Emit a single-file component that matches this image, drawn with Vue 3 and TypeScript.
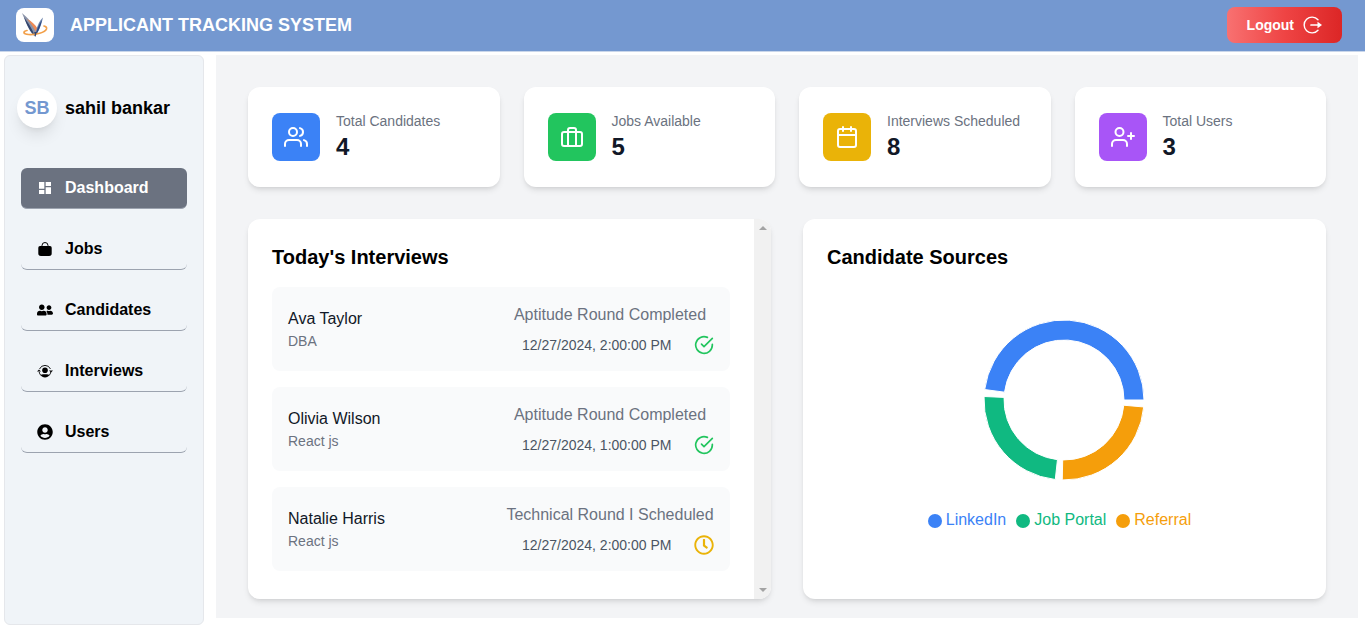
<script setup lang="ts">
interface Slice { name: string; value: number; color: string }
interface Interview { name: string; role: string; status: string; time: string; done: boolean }

const nav = [
  { label: 'Dashboard', icon: 'dashboard', active: true },
  { label: 'Jobs', icon: 'bag', active: false },
  { label: 'Candidates', icon: 'people', active: false },
  { label: 'Interviews', icon: 'orbit', active: false },
  { label: 'Users', icon: 'account', active: false },
]

const stats = [
  { label: 'Total Candidates', value: 4, tone: 'blue', icon: 'users' },
  { label: 'Jobs Available', value: 5, tone: 'green', icon: 'briefcase' },
  { label: 'Interviews Scheduled', value: 8, tone: 'yellow', icon: 'calendar' },
  { label: 'Total Users', value: 3, tone: 'purple', icon: 'userplus' },
]

const interviews: Interview[] = [
  { name: 'Ava Taylor', role: 'DBA', status: 'Aptitude Round Completed', time: '12/27/2024, 2:00:00 PM', done: true },
  { name: 'Olivia Wilson', role: 'React js', status: 'Aptitude Round Completed', time: '12/27/2024, 1:00:00 PM', done: true },
  { name: 'Natalie Harris', role: 'React js', status: 'Technical Round I Scheduled', time: '12/27/2024, 2:00:00 PM', done: false },
]

const sources: Slice[] = [
  { name: 'LinkedIn', value: 2, color: '#3b82f6' },
  { name: 'Job Portal', value: 1, color: '#10b981' },
  { name: 'Referral', value: 1, color: '#f59e0b' },
]

const OUTER = 80
const INNER = 60
const PAD = 5

function point(radius: number, degrees: number): string {
  const a = (degrees * Math.PI) / 180
  return `${(radius * Math.cos(a)).toFixed(3)} ${(-radius * Math.sin(a)).toFixed(3)}`
}

function buildSlices(items: Slice[]) {
  const total = items.reduce((sum, s) => sum + s.value, 0)
  const usable = 360 - PAD * items.length
  let start = 0
  return items.map((s) => {
    const end = start + (s.value / total) * usable
    const large = end - start > 180 ? 1 : 0
    const d = `M${point(OUTER, start)}A${OUTER} ${OUTER} 0 ${large} 0 ${point(OUTER, end)}L${point(INNER, end)}A${INNER} ${INNER} 0 ${large} 1 ${point(INNER, start)}Z`
    start = end + PAD
    return { ...s, d }
  })
}

const slices = buildSlices(sources)
</script>

<template>
  <div class="app">
    <header class="topbar">
      <div class="brand">
        <span class="logo">
          <svg viewBox="0 0 38 34" width="38" height="34" aria-hidden="true">
            <path d="M6 5C11 9 17 16 20.500 22L19.500 28.500C15 24 10 15 6 5Z" fill="#8b93a8" />
            <path d="M8 9C12 15 16 20 19 28.500C14 24 10.500 17 8 9Z" fill="#33456d" />
            <path d="M11 11C15.500 13 19.500 17 21.500 20.500L20 24C17.500 19 14.500 15 11 11Z" fill="#ee8a55" />
            <path d="M27 9.500C23 13 20 20 19 28.500C22.500 24 25 18 27 9.500Z" fill="#6f86ad" />
            <path d="M26 12C22.500 17 20.500 22 19.300 28C22 24 24.500 19 26 12Z" fill="#2c4a86" />
            <path d="M11 22.500C6.500 23.500 7 26 12.500 26.500C20 27 29 24.500 30.500 21C31 19.500 30 18.500 28 18" fill="none" stroke="#f2a04a" stroke-width="1.700" stroke-linecap="round" />
            <path d="M18.200 24L19.300 29L20.800 24Z" fill="#33456d" />
          </svg>
        </span>
        <h1 class="title">APPLICANT TRACKING SYSTEM</h1>
      </div>
      <button type="button" class="logout">
        <span>Logout</span>
        <svg viewBox="0 0 20 20" width="20" height="20" aria-hidden="true">
          <path d="M16 4.800A7.900 7.900 0 1 0 16 15.200" fill="none" stroke="currentColor" stroke-width="1.400" stroke-linecap="round" />
          <path d="M9 10H16" fill="none" stroke="currentColor" stroke-width="1.700" stroke-linecap="round" />
          <path d="M15.500 6.800L20 10L15.500 13.200Z" fill="currentColor" />
        </svg>
      </button>
    </header>

    <div class="body">
      <aside class="sidebar">
        <div class="profile">
          <span class="avatar">SB</span>
          <span class="user">sahil bankar</span>
        </div>
        <nav class="nav">
          <a v-for="item in nav" :key="item.label" href="#" class="nav-item" :class="{ active: item.active }">
            <svg v-if="item.icon === 'dashboard'" class="nav-icon" viewBox="0 0 24 24" aria-hidden="true">
              <path d="M3 13h8V3H3v10zm0 8h8v-6H3v6zm10 0h8V11h-8v10zm0-18v6h8V3h-8z" />
            </svg>
            <svg v-else-if="item.icon === 'bag'" class="nav-icon" viewBox="0 0 16 16" aria-hidden="true">
              <path d="M3 5h10a1.700 1.700 0 0 1 1.700 1.700V12.500a2.500 2.500 0 0 1-2.500 2.500H3.800a2.500 2.500 0 0 1-2.500-2.500V6.700A1.700 1.700 0 0 1 3 5z" />
              <path d="M5 5.500V4.500a3 3 0 0 1 6 0V5.500" fill="none" stroke="currentColor" stroke-width="1" />
            </svg>
            <svg v-else-if="item.icon === 'people'" class="nav-icon" viewBox="0 0 640 512" aria-hidden="true">
              <path d="M192 256c61.900 0 112-50.100 112-112S253.900 32 192 32 80 82.100 80 144s50.100 112 112 112zm76.800 32h-8.300c-20.800 10-43.900 16-68.500 16s-47.600-6-68.500-16h-8.300C51.600 288 0 339.600 0 403.200V432c0 26.500 21.500 48 48 48h288c26.500 0 48-21.500 48-48v-28.800c0-63.600-51.600-115.200-115.200-115.200zM480 256c53 0 96-43 96-96s-43-96-96-96-96 43-96 96 43 96 96 96zm48 32h-3.800c-13.900 4.800-28.600 8-44.200 8s-30.300-3.200-44.200-8H432c-20.400 0-39.200 5.900-55.700 15.400 24.400 26.300 39.700 61.200 39.700 99.800v38.400c0 2.200-.5 4.300-.6 6.400H592c26.500 0 48-21.500 48-48 0-61.900-50.100-112-112-112z" />
            </svg>
            <svg v-else-if="item.icon === 'orbit'" class="nav-icon" viewBox="0 0 16 16" aria-hidden="true">
              <path d="M2.500 6A6 6 0 0 1 13.500 6" fill="none" stroke="currentColor" stroke-width="0.900" />
              <path d="M0 8.500L2 6.500L4 8.500ZM12 7.500L14 9.500L16 7.500Z" />
              <path d="M2.200 9A6 6 0 0 0 4 12.500M13.800 9A6 6 0 0 1 12 12.500" fill="none" stroke="currentColor" stroke-width="0.900" />
              <circle cx="8" cy="7.300" r="2.800" />
              <path d="M3.500 12C5 10.900 6.500 11.300 8 11.300S11 10.900 12.500 12C11.500 13.600 10 14.500 8 14.500S4.500 13.600 3.500 12Z" />
            </svg>
            <svg v-else class="nav-icon" viewBox="0 0 496 512" aria-hidden="true">
              <path d="M248 8C111 8 0 119 0 256s111 248 248 248 248-111 248-248S385 8 248 8zm0 96c48.600 0 88 39.400 88 88s-39.400 88-88 88-88-39.400-88-88 39.400-88 88-88zm0 344c-58.700 0-111.300-26.600-146.500-68.200 18.800-35.400 55.600-59.800 98.500-59.800 2.400 0 4.800.4 7.100 1.100 13 4.200 26.600 6.900 40.900 6.900 14.300 0 28-2.700 40.900-6.900 2.300-.7 4.700-1.100 7.100-1.100 42.900 0 79.700 24.400 98.500 59.800C359.300 421.400 306.700 448 248 448z" />
            </svg>
            <span>{{ item.label }}</span>
          </a>
        </nav>
      </aside>

      <main class="main">
        <section class="stats">
          <article v-for="s in stats" :key="s.label" class="card stat">
            <span class="tile" :class="s.tone">
              <svg class="line-icon" viewBox="0 0 24 24" width="24" height="24" aria-hidden="true">
                <template v-if="s.icon === 'users'">
                  <path d="M17 21v-2a4 4 0 0 0-4-4H5a4 4 0 0 0-4 4v2" />
                  <circle cx="9" cy="7" r="4" />
                  <path d="M23 21v-2a4 4 0 0 0-3-3.870M16 3.130a4 4 0 0 1 0 7.750" />
                </template>
                <template v-else-if="s.icon === 'briefcase'">
                  <rect x="2" y="7" width="20" height="14" rx="2" />
                  <path d="M16 21V5a2 2 0 0 0-2-2h-4a2 2 0 0 0-2 2v16" />
                </template>
                <template v-else-if="s.icon === 'calendar'">
                  <rect x="3" y="4" width="18" height="18" rx="2" />
                  <path d="M16 2v4M8 2v4M3 10h18" />
                </template>
                <template v-else>
                  <path d="M16 21v-2a4 4 0 0 0-4-4H5a4 4 0 0 0-4 4v2" />
                  <circle cx="8.500" cy="7" r="4" />
                  <path d="M20 8v6M23 11h-6" />
                </template>
              </svg>
            </span>
            <div>
              <p class="stat-label">{{ s.label }}</p>
              <p class="stat-value">{{ s.value }}</p>
            </div>
          </article>
        </section>

        <section class="panels">
          <article class="card today">
            <div class="today-content">
              <h2 class="heading">Today's Interviews</h2>
              <ul class="list">
                <li v-for="i in interviews" :key="i.name" class="row">
                  <div>
                    <p class="name">{{ i.name }}</p>
                    <p class="role">{{ i.role }}</p>
                  </div>
                  <div class="detail">
                    <p class="status">{{ i.status }}</p>
                    <div class="when">
                      <time>{{ i.time }}</time>
                      <svg v-if="i.done" class="line-icon done" viewBox="0 0 24 24" width="20" height="20" aria-hidden="true">
                        <path d="M22 11.080V12a10 10 0 1 1-5.930-9.140" />
                        <path d="M22 4L12 14.010l-3-3" />
                      </svg>
                      <svg v-else class="pending" viewBox="0 0 512 512" width="20" height="20" aria-hidden="true">
                        <path d="M256 8C119 8 8 119 8 256s111 248 248 248 248-111 248-248S393 8 256 8zm0 448c-110.500 0-200-89.500-200-200S145.500 56 256 56s200 89.500 200 200-89.500 200-200 200zm61.800-104.400l-84.900-61.700c-3.100-2.300-4.900-5.900-4.900-9.700V116c0-6.600 5.400-12 12-12h32c6.600 0 12 5.400 12 12v141.700l66.800 48.600c5.400 3.900 6.500 11.400 2.600 16.800L334.600 349c-3.900 5.300-11.400 6.500-16.800 2.600z" />
                      </svg>
                    </div>
                  </div>
                </li>
              </ul>
            </div>
            <div class="track" aria-hidden="true">
              <svg viewBox="0 0 8 4" width="8" height="4"><path d="M0 4L4 0L8 4Z" /></svg>
              <svg viewBox="0 0 8 4" width="8" height="4"><path d="M0 0L4 4L8 0Z" /></svg>
            </div>
          </article>

          <article class="card sources">
            <h2 class="heading">Candidate Sources</h2>
            <svg class="donut" viewBox="-81 -81 163 162" width="163" height="162" role="img" aria-label="Candidate Sources">
              <path v-for="s in slices" :key="s.name" :d="s.d" :fill="s.color" stroke="#fff" stroke-width="1" />
            </svg>
            <ul class="legend">
              <li v-for="s in slices" :key="s.name" :style="{ color: s.color }">
                <svg viewBox="0 0 14 14" width="14" height="14" aria-hidden="true"><circle cx="7" cy="7" r="7" fill="currentColor" /></svg>
                <span>{{ s.name }}</span>
              </li>
            </ul>
          </article>
        </section>
      </main>
    </div>
  </div>
</template>

<style>
body {
  margin: 0;
  background: #fff;
}
</style>

<style scoped>
.app,
.app * {
  box-sizing: border-box;
}
.app {
  font-family: "Liberation Sans", Arial, sans-serif;
  font-size: 16px;
  line-height: 24px;
  color: #000;
}
h1, h2, p, ul {
  margin: 0;
  padding: 0;
}
ul {
  list-style: none;
}
svg {
  flex-shrink: 0;
}
.topbar {
  display: flex;
  align-items: center;
  justify-content: space-between;
  height: 52px;
  padding: 0 23px 1px 16px;
  background: #7498d0;
  border-bottom: 1px solid #c9d6ea;
}
.brand {
  display: flex;
  align-items: center;
  gap: 16px;
}
.logo {
  display: flex;
  background: #fff;
  border-radius: 8px;
}
.title {
  font-size: 18px;
  line-height: 28px;
  font-weight: 700;
  color: #fff;
}
.logout {
  display: flex;
  align-items: center;
  gap: 8px;
  height: 36px;
  padding: 0 20px;
  border: 0;
  border-radius: 8px;
  background: linear-gradient(to right, #f87171, #ef4444, #dc2626);
  color: #fff;
  font-family: inherit;
  font-size: 14px;
  line-height: 20px;
  font-weight: 700;
}
.body {
  display: flex;
  align-items: flex-start;
  gap: 12px;
  padding: 3px 7px 2px 4px;
}
.sidebar {
  flex: 0 0 200px;
  min-height: calc(100vh - 57px);
  padding: 32px 16px;
  background: #f0f4f8;
  border: 1px solid #e5e7eb;
  border-radius: 6px;
}
.profile {
  display: flex;
  align-items: center;
  gap: 8px;
  margin: 0 -4px 40px;
}
.avatar {
  display: flex;
  align-items: center;
  justify-content: center;
  width: 40px;
  height: 40px;
  border-radius: 50%;
  background: #fff;
  color: #7498d0;
  font-size: 18px;
  font-weight: 700;
  box-shadow: 0 10px 15px -3px rgba(0, 0, 0, 0.1), 0 4px 6px -4px rgba(0, 0, 0, 0.1);
}
.user {
  font-size: 18px;
  font-weight: 700;
}
.nav {
  display: flex;
  flex-direction: column;
  gap: 20px;
}
.nav-item {
  display: flex;
  align-items: center;
  gap: 12px;
  padding: 8px 16px;
  border-bottom: 1px solid #9ca3af;
  border-radius: 6px;
  color: #000;
  font-weight: 700;
  text-decoration: none;
}
.nav-item.active {
  background: #6b7280;
  color: #fff;
}
.nav-icon {
  width: 16px;
  height: 16px;
  fill: currentColor;
}
.main {
  flex: 1;
  min-width: 0;
  padding: 32px 32px 19px;
  background: #f3f4f6;
}
.card {
  background: #fff;
  border-radius: 12px;
  box-shadow: 0 4px 6px -1px rgba(0, 0, 0, 0.1), 0 2px 4px -2px rgba(0, 0, 0, 0.1);
}
.stats {
  display: grid;
  grid-template-columns: repeat(4, minmax(0, 1fr));
  gap: 24px;
  margin-bottom: 32px;
}
.stat {
  display: flex;
  align-items: center;
  gap: 16px;
  padding: 24px;
}
.tile {
  display: flex;
  padding: 12px;
  border-radius: 8px;
  color: #fff;
}
.blue { background: #3b82f6; }
.green { background: #22c55e; }
.yellow { background: #eab308; }
.purple { background: #a855f7; }
.line-icon {
  fill: none;
  stroke: currentColor;
  stroke-width: 2;
  stroke-linecap: round;
  stroke-linejoin: round;
}
.stat-label {
  font-size: 14px;
  line-height: 20px;
  color: #6b7280;
}
.stat-value {
  font-size: 24px;
  line-height: 32px;
  font-weight: 700;
  color: #111827;
}
.panels {
  display: grid;
  grid-template-columns: repeat(2, minmax(0, 1fr));
  grid-auto-rows: minmax(380px, auto);
  gap: 32px;
}
.today {
  display: flex;
  overflow: hidden;
}
.today-content {
  flex: 1;
  min-width: 0;
  padding: 24px;
}
.heading {
  margin-bottom: 16px;
  font-size: 20px;
  line-height: 28px;
  font-weight: 700;
}
.list {
  display: flex;
  flex-direction: column;
  gap: 16px;
}
.row {
  display: flex;
  align-items: center;
  justify-content: space-between;
  padding: 16px;
  border-radius: 8px;
  background: #f9fafb;
}
.name {
  color: #111827;
}
.role {
  font-size: 14px;
  line-height: 20px;
  color: #6b7280;
}
.detail {
  min-width: 208px;
}
.status {
  text-align: center;
  color: #6b7280;
}
.when {
  display: flex;
  justify-content: space-between;
  align-items: center;
  margin-top: 8px;
  padding-left: 16px;
  font-size: 14px;
  line-height: 20px;
  color: #4b5563;
}
.done {
  color: #22c55e;
}
.pending {
  fill: #eab308;
}
.track {
  display: flex;
  flex-direction: column;
  align-items: center;
  justify-content: space-between;
  width: 17px;
  padding: 7px 0;
  background: #f1f1f1;
  fill: #a3a3a3;
}
.sources {
  display: flex;
  flex-direction: column;
  padding: 24px;
}
.donut {
  align-self: center;
  margin-top: 32px;
}
.legend {
  display: flex;
  justify-content: center;
  margin-top: 27px;
}
.legend li {
  margin-right: 10px;
}
.legend svg {
  display: inline-block;
  vertical-align: middle;
  margin-right: 4px;
}
</style>
